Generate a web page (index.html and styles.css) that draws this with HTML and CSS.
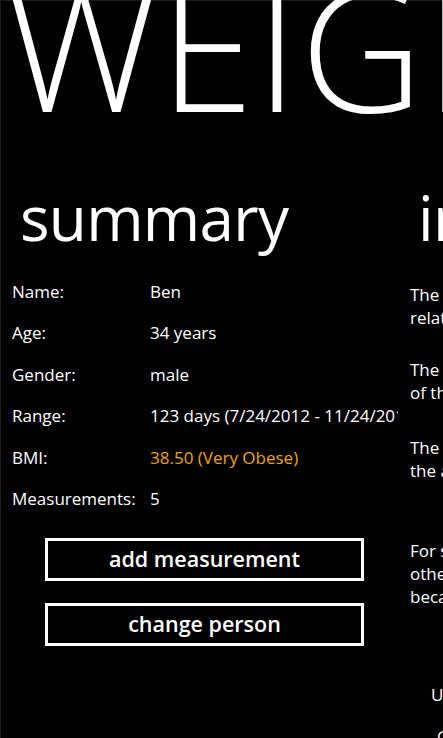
FILE: index.html
```html
<!DOCTYPE html>
<html>
<head>
<meta charset="utf-8">
<link rel="stylesheet" href="styles.css">
</head>
<body>
<div class="screen">
  <div class="title">WEIGHT</div>
  <div class="panorama">
    <section class="panel summary">
      <h2 class="header">summary</h2>
      <div class="rows">
        <div class="row"><span class="label">Name:</span><span class="value">Ben</span></div>
        <div class="row"><span class="label">Age:</span><span class="value">34 years</span></div>
        <div class="row"><span class="label">Gender:</span><span class="value">male</span></div>
        <div class="row"><span class="label">Range:</span><span class="value">123 days (7/24/2012 - 11/24/2012)</span></div>
        <div class="row"><span class="label">BMI:</span><span class="value bmi">38.50 (Very Obese)</span></div>
        <div class="row"><span class="label">Measurements:</span><span class="value">5</span></div>
      </div>
      <div class="buttons">
        <button class="btn">add measurement</button>
        <button class="btn">change person</button>
      </div>
    </section>
    <section class="panel info">
      <h2 class="header">info</h2>
      <div class="info-body">
        <p class="para">The BMI is a measure of body fat based on the<br>relation between weight and height.</p>
        <p class="para p2">The graph shows the weight over the course<br>of the measurements.</p>
        <p class="para p3">The trend line displays the moving average of<br>the actual measurements.</p>
        <p class="para">For some people the BMI can be misleading, for<br>other people the value may be less accurate<br>because of muscle mass.</p>
        <p class="foot foot1">Updated 11/24/2012</p>
        <p class="foot foot2">Copyright 2012</p>
      </div>
    </section>
  </div>
</div>
</body>
</html>
```
FILE: styles.css
```css
html, body {
  margin: 0;
  padding: 0;
  background: #000;
}
body {
  width: 443px;
  height: 738px;
  overflow: hidden;
  font-family: "Open Sans", "Noto Sans", sans-serif;
  color: #fff;
}
.screen {
  width: 443px;
  height: 738px;
  overflow: hidden;
  box-shadow: inset 1px 1px 0 #1c1c1c;
}
.title {
  font-family: "Open Sans", sans-serif;
  font-weight: 300;
  font-size: 170px;
  line-height: 170px;
  margin-top: -39px;
  margin-left: 6px;
  white-space: nowrap;
  letter-spacing: 2px;
}
.panorama {
  display: flex;
  margin-top: 46px;
  width: 900px;
}
.panel {
  flex: none;
}
.summary {
  width: 386px;
  padding-left: 12px;
  overflow: hidden;
}
.info {
  width: 400px;
  padding-left: 12px;
}
.header {
  margin: 0 0 0 8px;
  font-weight: 400;
  font-size: 62px;
  line-height: 80px;
  letter-spacing: -0.7px;
}
.rows {
  margin-top: 14px;
}
.row {
  display: flex;
  height: 41.4px;
  line-height: 41.4px;
  font-size: 17px;
  white-space: nowrap;
}
.label {
  width: 138px;
  flex: none;
}
.bmi {
  color: #f0a30a;
}
.buttons {
  display: flex;
  flex-direction: column;
  gap: 22px;
  margin: 19px 0 0 33px;
}
.btn {
  width: 319px;
  height: 43px;
  background: #000;
  border: 3px solid #fff;
  color: #fff;
  font-family: "Open Sans", sans-serif;
  font-weight: 600;
  font-size: 21.5px;
  line-height: 30px;
  padding: 0 0 2px;
}
.info-body {
  padding-top: 26px;
}
.para {
  margin: 0 0 29px;
  font-size: 17px;
  line-height: 23px;
  white-space: nowrap;
}
.p2 {
  margin-bottom: 32px;
}
.p3 {
  margin-bottom: 57px;
}
.foot {
  margin: 0;
  padding-left: 21px;
  font-size: 17px;
  line-height: 42px;
}
.foot1 {
  margin-top: 66px;
}
.foot2 {
  padding-left: 27px;
}
```
